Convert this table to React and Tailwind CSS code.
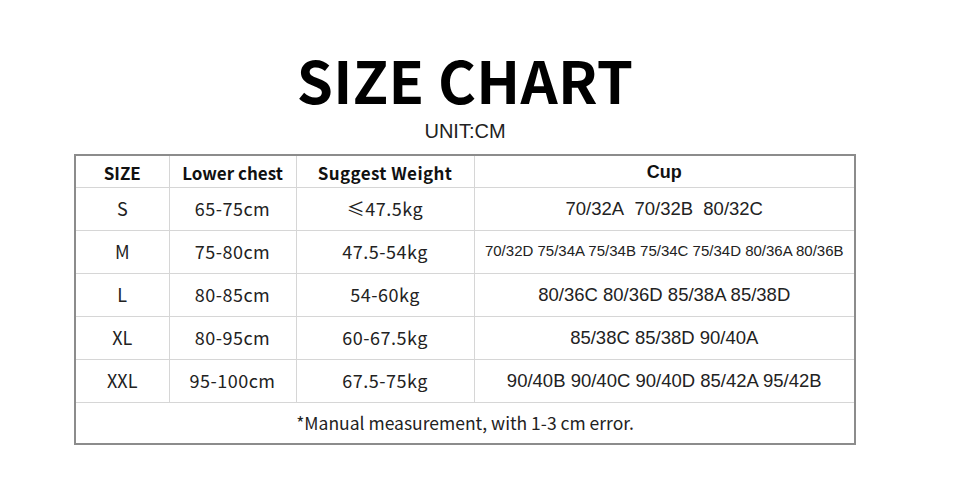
const ROWS = [
  { size: "S", chest: "65-75cm", weight: "≤47.5kg", cup: "70/32A\u00a0\u00a070/32B\u00a0\u00a080/32C" },
  { size: "M", chest: "75-80cm", weight: "47.5-54kg", cup: "70/32D 75/34A 75/34B 75/34C 75/34D 80/36A 80/36B", small: true },
  { size: "L", chest: "80-85cm", weight: "54-60kg", cup: "80/36C 80/36D 85/38A 85/38D" },
  { size: "XL", chest: "80-95cm", weight: "60-67.5kg", cup: "85/38C 85/38D 90/40A" },
  { size: "XXL", chest: "95-100cm", weight: "67.5-75kg", cup: "90/40B 90/40C 90/40D 85/42A 95/42B" },
];

const cjk = "font-['Noto_Sans_CJK_SC',sans-serif]";
const arial = "font-['Liberation_Sans',Arial,sans-serif]";

export default function App() {
  return <div className="h-[490px] w-[960px] bg-white text-[#111]">
    <div className="flex w-[930px] flex-col items-center">
      <h1 className={`mt-[49px] text-[58px] font-semibold leading-[60px] tracking-[0.3px] text-black ${cjk}`}>SIZE CHART</h1>
      <p className={`mt-[11px] text-[20px] leading-[22px] text-[#222] ${arial}`}>UNIT:CM</p>
      <table className="mt-[12px] w-[780px] table-fixed border-collapse border-2 border-[#8c8c8c] text-center">
        <colgroup>
          <col className="w-[94px]"/>
          <col className="w-[127px]"/>
          <col className="w-[178px]"/>
          <col className="w-[381px]"/>
        </colgroup>
        <thead>
          <tr className={`h-[32px] text-[17px] font-bold ${cjk}`}>
            <th className="border border-[#d6d6d6] pt-[2px] font-bold">SIZE</th>
            <th className="border border-[#d6d6d6] pt-[2px] font-bold">Lower chest</th>
            <th className="border border-[#d6d6d6] pt-[2px] font-bold tracking-[0.4px]">Suggest Weight</th>
            <th className={`border border-[#d6d6d6] pt-[2px] text-[18px] font-bold ${arial}`}>Cup</th>
          </tr>
        </thead>
        <tbody>
          {ROWS.map((row) => <tr className={`h-[43px] text-[18px] text-[#222] ${cjk}`} key={row.size}>
            <td className="border border-[#d6d6d6]">{row.size}</td>
            <td className="border border-[#d6d6d6] tracking-[0.5px]">{row.chest}</td>
            <td className="border border-[#d6d6d6] tracking-[0.5px]">{row.weight}</td>
            <td className={`border border-[#d6d6d6] whitespace-nowrap ${arial} ${row.small ? "text-[15px]" : "text-[18.5px]"}`}>{row.cup}</td>
          </tr>)}
          <tr className={`h-[42px] text-[17.5px] text-[#222] ${cjk}`}>
            <td colSpan={4} className="border border-[#d6d6d6]">*Manual measurement, with 1-3 cm error.</td>
          </tr>
        </tbody>
      </table>
    </div>
  </div>;
}
